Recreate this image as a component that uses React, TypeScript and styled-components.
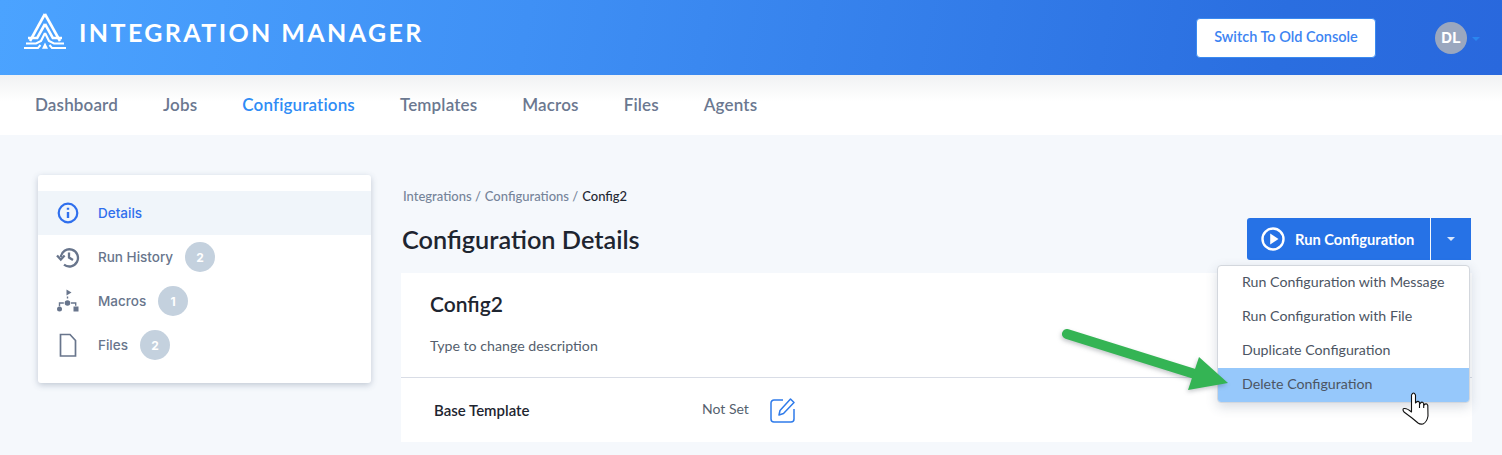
import React from "react";
import styled, { createGlobalStyle } from "styled-components";

const GlobalStyle = createGlobalStyle`
  html, body {
    margin: 0;
    padding: 0;
    background: #f5f8fc;
    font-family: "Lato", "Open Sans", sans-serif;
    overflow: hidden;
  }
`;

const Page = styled.div`
  width: 1502px;
  height: 455px;
  overflow: hidden;
  position: relative;
`;

const Header = styled.header`
  height: 75px;
  background: linear-gradient(100deg, #4ba3ff 0%, #3f90f5 35%, #2a6ee0 85%, #2968dd 100%);
  display: flex;
  align-items: center;
  padding-left: 24px;
  box-sizing: border-box;
`;

const Brand = styled.div`
  display: flex;
  align-items: center;
  gap: 13px;
  margin-top: -12px;
`;

const BrandName = styled.div`
  font-weight: 700;
  font-size: 25px;
  letter-spacing: 2.4px;
  color: #fff;
`;

const SwitchButton = styled.button`
  margin-left: auto;
  width: 180px;
  height: 40px;
  padding: 0 0 2px;
  background: #fff;
  border: 1px solid #3a8af0;
  border-radius: 4px;
  color: #3d84f2;
  font-family: "Lato", sans-serif;
  font-size: 14.5px;
  font-weight: 600;
`;

const Avatar = styled.div`
  margin-left: 59px;
  width: 32px;
  height: 32px;
  border-radius: 50%;
  background: #9aa7bf;
  color: #fff;
  font-family: "Inter", sans-serif;
  font-size: 15px;
  font-weight: 700;
  display: flex;
  align-items: center;
  justify-content: center;
`;

const Caret = styled.div<{ $color: string }>`
  width: 0;
  height: 0;
  border-left: 4px solid transparent;
  border-right: 4px solid transparent;
  border-top: 4px solid ${(p) => p.$color};
`;

const AvatarCaret = styled(Caret)`
  margin: 2px 22px 0 5px;
`;

const Nav = styled.nav`
  height: 60px;
  background: linear-gradient(#f1f2f3 0%, #fff 45%);
  display: flex;
  align-items: center;
  padding: 0 0 2px 35px;
  box-sizing: border-box;
  gap: 45px;
`;

const NavLink = styled.a<{ $active?: boolean }>`
  font-size: 17px;
  font-weight: 600;
  letter-spacing: 0.15px;
  color: ${(p) => (p.$active ? "#2f8cf5" : "#6b7890")};
`;

const Body = styled.main`
  display: flex;
  align-items: flex-start;
  padding: 40px 30px 0 38px;
`;

const Sidebar = styled.aside`
  width: 333px;
  height: 208px;
  box-sizing: border-box;
  background: #fff;
  border-radius: 3px;
  box-shadow: 0 2px 6px rgba(70, 90, 120, 0.3);
  padding-top: 16px;
  flex-shrink: 0;
`;

const SideItem = styled.div<{ $active?: boolean }>`
  height: 44px;
  display: flex;
  align-items: center;
  padding-left: 18px;
  background: ${(p) => (p.$active ? "#f0f5fa" : "transparent")};
  color: ${(p) => (p.$active ? "#2f6fed" : "#68758c")};
  font-family: "Inter", sans-serif;
  font-size: 13.5px;
  font-weight: 500;
`;

const SideIcon = styled.svg`
  width: 24px;
  height: 24px;
  margin-right: 18px;
  flex-shrink: 0;
`;

const Badge = styled.span`
  width: 30px;
  height: 30px;
  margin-left: 12px;
  border-radius: 50%;
  background: #c4d1de;
  color: #fff;
  font-size: 12px;
  font-weight: 700;
  display: flex;
  align-items: center;
  justify-content: center;
`;

const Content = styled.section`
  margin-left: 30px;
  width: 1071px;
  flex-shrink: 0;
`;

const Crumbs = styled.div`
  margin: 13px 0 0 2px;
  height: 16px;
  line-height: 16px;
  font-size: 13px;
  font-weight: 500;
  color: #76849a;
  display: flex;
  gap: 4px;
`;

const CrumbCurrent = styled.span`
  color: #1f2733;
`;

const TitleRow = styled.div`
  margin-top: 10px;
  height: 50px;
  display: flex;
  align-items: center;
  justify-content: space-between;
`;

const Title = styled.h1`
  margin: 0 0 0 1px;
  font-size: 25.3px;
  font-weight: 600;
  color: #1e2530;
`;

const RunGroup = styled.div`
  display: flex;
  height: 42px;
  margin-right: 1px;
`;

const RunButton = styled.button`
  width: 183px;
  border: 0;
  border-radius: 3px 0 0 3px;
  background: #2672e6;
  color: #fff;
  font-family: "Lato", sans-serif;
  font-size: 14.7px;
  font-weight: 700;
  display: flex;
  align-items: center;
  gap: 10px;
  padding: 0 0 0 14px;
`;

const RunCaret = styled.button`
  width: 40px;
  margin-left: 1px;
  border: 0;
  background: #2672e6;
  display: flex;
  align-items: center;
  justify-content: center;
`;

const Card = styled.div`
  background: #fff;
  margin-top: 9px;
  height: 169px;
`;

const CardTop = styled.div`
  height: 105px;
  box-sizing: border-box;
  border-bottom: 1px solid #d9dde6;
  padding: 18px 29px 0;
`;

const CardName = styled.div`
  font-size: 21px;
  font-weight: 600;
  color: #1e2530;
`;

const Description = styled.div`
  margin-top: 21px;
  font-size: 14.2px;
  color: #555f6e;
`;

const CardRow = styled.div`
  height: 64px;
  display: flex;
  align-items: center;
  padding-left: 33px;
`;

const RowLabel = styled.div`
  width: 268px;
  font-size: 15px;
  font-weight: 600;
  color: #1e2530;
`;

const RowValue = styled.div`
  width: 68px;
  margin-top: -3px;
  font-size: 14px;
  color: #555f6e;
`;

const Menu = styled.div`
  position: absolute;
  left: 1217px;
  top: 265px;
  width: 253px;
  height: 138px;
  box-sizing: border-box;
  background: #fff;
  border: 1px solid #d3d7dd;
  border-radius: 4px;
  box-shadow: 0 4px 12px rgba(60, 80, 110, 0.2);
  overflow: hidden;
`;

const MenuItem = styled.div<{ $hover?: boolean }>`
  height: 34px;
  display: flex;
  align-items: center;
  padding: 0 0 3px 24px;
  box-sizing: border-box;
  font-size: 14.2px;
  color: #4c5563;
  background: ${(p) => (p.$hover ? "#96c8fb" : "transparent")};
`;

const Arrow = styled.svg`
  position: absolute;
  left: 1050px;
  top: 315px;
  width: 190px;
  height: 90px;
  filter: drop-shadow(-1px 2px 2px rgba(60, 70, 80, 0.3));
`;

const Cursor = styled.svg`
  position: absolute;
  left: 1400px;
  top: 388px;
  width: 32px;
  height: 38px;
`;

const navItems = ["Dashboard", "Jobs", "Configurations", "Templates", "Macros", "Files", "Agents"];

const menuItems = ["Run Configuration with Message", "Run Configuration with File", "Duplicate Configuration", "Delete Configuration"];

const Logo = () => (
  <svg width="42" height="37" viewBox="0 0 42 37" fill="none" stroke="#fff" strokeWidth="2.6">
    <path d="M20.9 1 L36 28" />
    <path d="M20.9 1 L6 28" />
    <path d="M21 11 L28.8 25 H38 M21 11 L13.2 25 H4" />
    <path d="M21 20 L25 28 L30 30.5 H40 M21 20 L17 28 L12 30.5 H2" strokeWidth="2.2" />
    <path d="M0 35 H14 L16.5 32 M42 35 H28 L25.5 32" strokeWidth="2" />
    <path d="M21 29.5 L24 35.8 H18 Z" fill="#fff" stroke="none" />
  </svg>
);

export default function App() {
  return (
    <Page>
      <GlobalStyle />
      <Header>
        <Brand>
          <Logo />
          <BrandName>INTEGRATION MANAGER</BrandName>
        </Brand>
        <SwitchButton>Switch To Old Console</SwitchButton>
        <Avatar>DL</Avatar>
        <AvatarCaret $color="#2a86f0" />
      </Header>
      <Nav>
        {navItems.map((item) => (
          <NavLink key={item} $active={item === "Configurations"}>{item}</NavLink>
        ))}
      </Nav>
      <Body>
        <Sidebar>
          <SideItem $active>
            <SideIcon viewBox="0 0 24 24" fill="none" stroke="#2f6fed" strokeWidth="2.2">
              <circle cx="12" cy="12" r="9.3" />
              <path d="M12 11 V17 M12 6.8 V8.8" strokeWidth="2.4" />
            </SideIcon>
            Details
          </SideItem>
          <SideItem>
            <SideIcon viewBox="0 0 24 24" fill="none" stroke="#68758c" strokeWidth="2.3">
              <path d="M4.8 12 A8.6 8.6 0 1 1 8 19.6" />
              <path d="M1 10.5 L4.8 14.5 L8.6 10.5" />
              <path d="M13 7.5 V12.5 L17 15" />
            </SideIcon>
            Run History
            <Badge>2</Badge>
          </SideItem>
          <SideItem>
            <SideIcon viewBox="0 0 24 24" fill="#68758c" stroke="none">
              <path d="M10.5 0.5 L15.5 3.5 L10.5 6.5 Z" />
              <circle cx="11.5" cy="14" r="2.8" />
              <circle cx="3.5" cy="20" r="2.5" />
              <rect x="17.5" y="17.5" width="5" height="5" />
              <path d="M10.8 7.5 h1.4 v2 h-1.4 Z M2.8 13.3 h5 v1.4 h-3.6 v2.5 h-1.4 Z M15 13.3 h5.4 v3.5 h-1.4 v-2.1 h-4 Z" />
            </SideIcon>
            Macros
            <Badge>1</Badge>
          </SideItem>
          <SideItem>
            <SideIcon viewBox="0 0 24 24" fill="none" stroke="#68758c" strokeWidth="1.7">
              <path d="M4.5 1.5 H14 L19.5 7.5 V23 H4.5 Z" />
            </SideIcon>
            Files
            <Badge>2</Badge>
          </SideItem>
        </Sidebar>
        <Content>
          <Crumbs>
            <span>Integrations /</span>
            <span>Configurations /</span>
            <CrumbCurrent>Config2</CrumbCurrent>
          </Crumbs>
          <TitleRow>
            <Title>Configuration Details</Title>
            <RunGroup>
              <RunButton>
                <svg width="24" height="24" viewBox="0 0 24 24" fill="none" stroke="#fff" strokeWidth="2.4">
                  <circle cx="12" cy="12" r="10.5" />
                  <path d="M9.2 6.5 L17.5 12 L9.2 17.5 Z" fill="#fff" stroke="none" />
                </svg>
                Run Configuration
              </RunButton>
              <RunCaret><Caret $color="#d8e6fb" /></RunCaret>
            </RunGroup>
          </TitleRow>
          <Card>
            <CardTop>
              <CardName>Config2</CardName>
              <Description>Type to change description</Description>
            </CardTop>
            <CardRow>
              <RowLabel>Base Template</RowLabel>
              <RowValue>Not Set</RowValue>
              <svg width="25" height="25" viewBox="0 0 25 25" fill="none" stroke="#2f7bea" strokeWidth="1.5" strokeLinejoin="round">
                <path d="M13 2 H4 A3 3 0 0 0 1 5 V21 A3 3 0 0 0 4 24 H21 A3 3 0 0 0 24 21 V11" />
                <path d="M20.5 1 L24 4.5 L13.5 15.5 L9 17 L10 12.5 Z" />
              </svg>
            </CardRow>
          </Card>
        </Content>
      </Body>
      <Menu>
        {menuItems.map((item) => (
          <MenuItem key={item} $hover={item === "Delete Configuration"}>{item}</MenuItem>
        ))}
      </Menu>
      <Arrow viewBox="0 0 190 90">
        <path d="M17 19 L148 60" stroke="#34b454" strokeWidth="10" strokeLinecap="round" />
        <path d="M149 42 L178 68 L138 75 Z" fill="#34b454" />
      </Arrow>
      <Cursor viewBox="0 0 32 38" fill="#fff" stroke="#111" strokeWidth="1.1" strokeLinejoin="round">
        <path d="M11.5 24 L11.5 7 Q13.5 3 15.5 7 L15.5 15 Q18 12 19.5 14.5 L19.8 16 Q22 12.5 23.7 15.5 L24 17 Q26.5 14.5 27.8 17.5 L28 28 Q27 34 23 36 Q20 36.5 18 35 L12 30 L4 24 Q2 21 4 20.5 Q7 20 11.5 24 Z" />
        <path d="M19.5 15 V20 M23.7 16 V20" fill="none" />
      </Cursor>
    </Page>
  );
}
